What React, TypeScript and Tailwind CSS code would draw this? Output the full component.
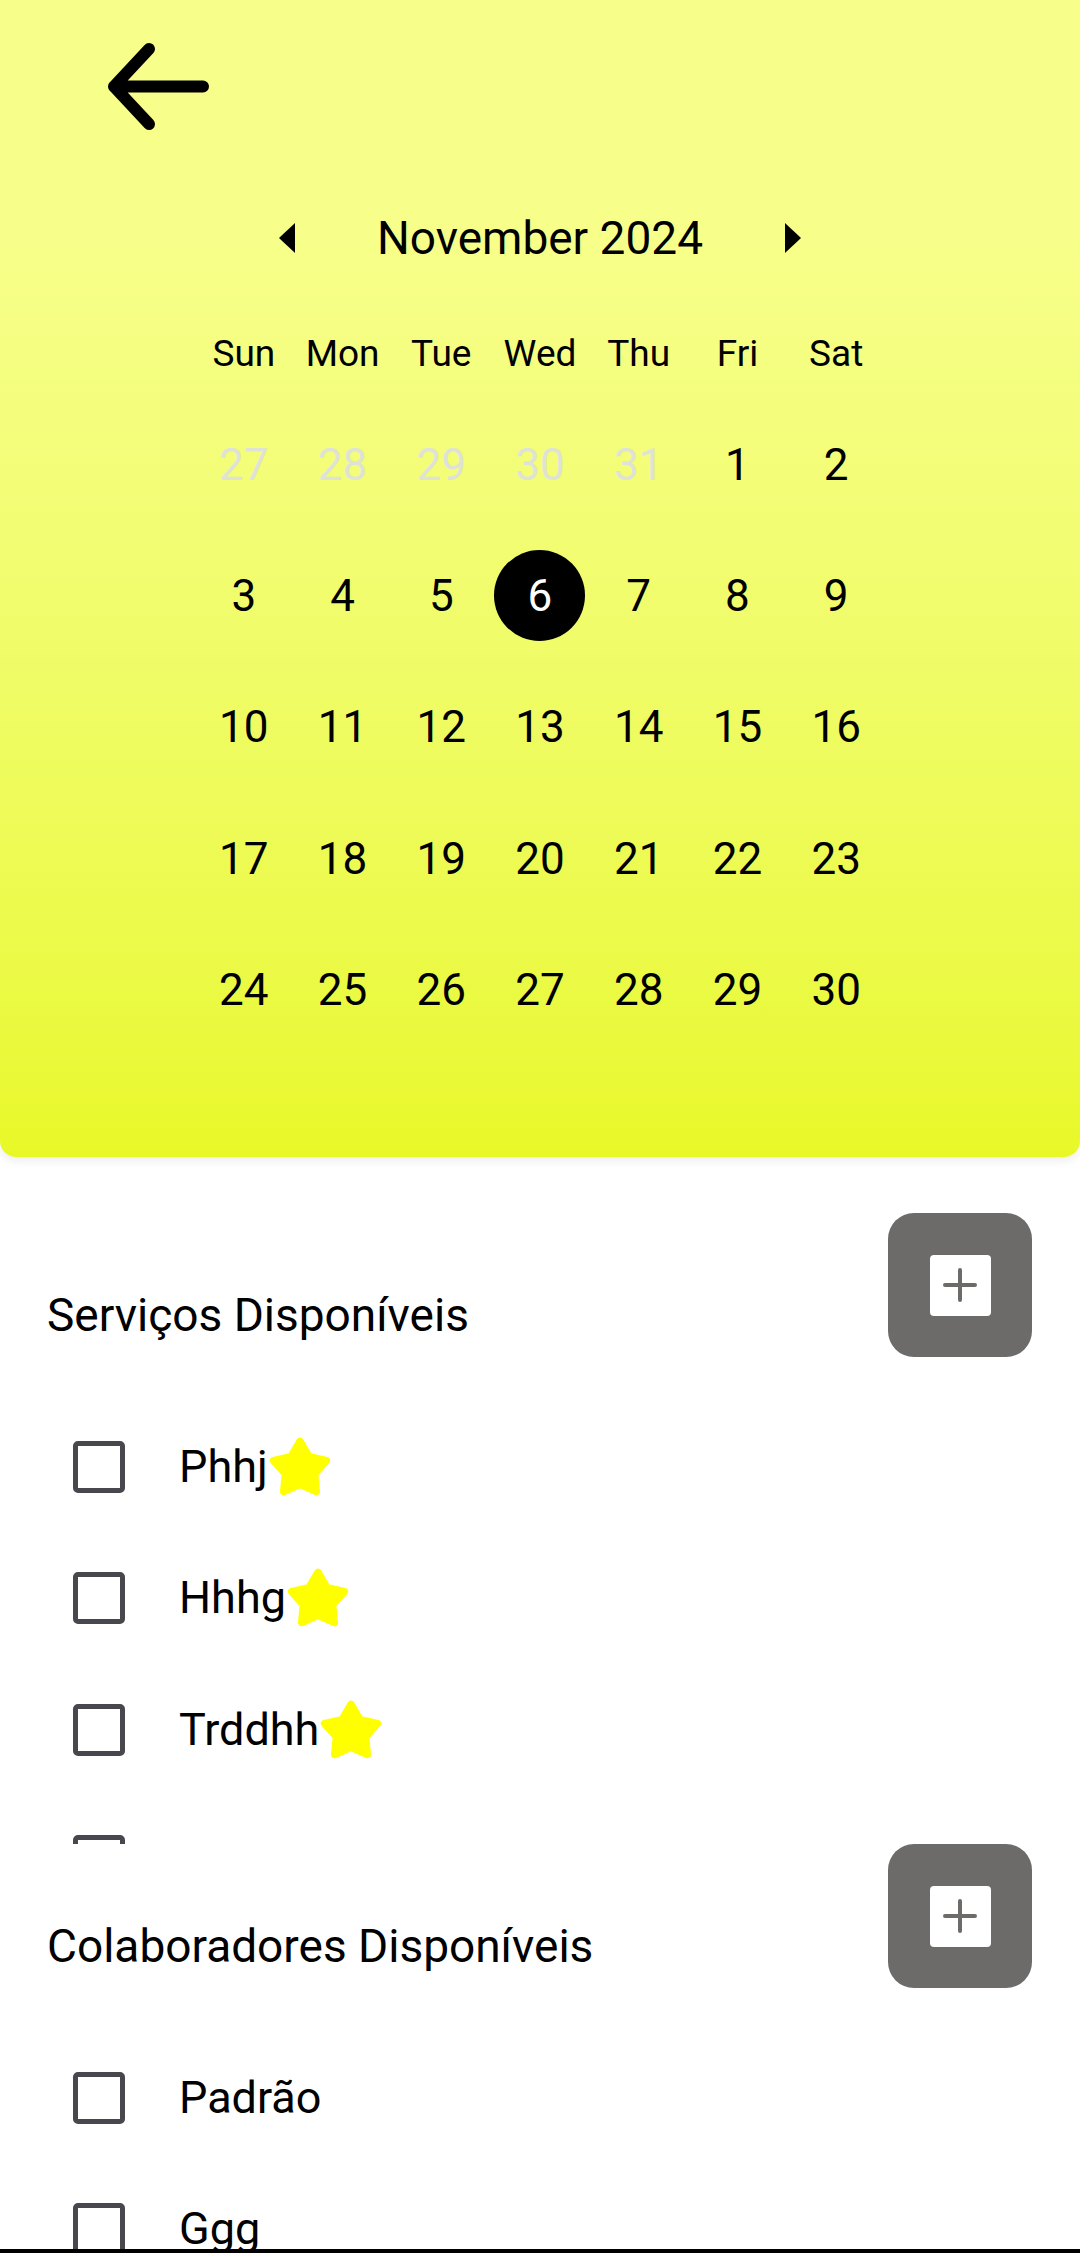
import React from "react"

const WEEKDAYS = ["Sun", "Mon", "Tue", "Wed", "Thu", "Fri", "Sat"]

const days: { n: number; muted?: boolean }[] = [
  ...[27, 28, 29, 30, 31].map((n) => ({ n, muted: true })),
  ...Array.from({ length: 30 }, (_, i) => ({ n: i + 1 })),
]

const SELECTED = 6

function Star() {
  return (
    <svg width="64" height="64" viewBox="0 0 62 62" className="shrink-0">
      <polygon
        points="31,6 39.8,20.9 56.7,24.7 45.3,37.6 46.9,54.8 31,48 15.1,54.8 16.7,37.6 5.3,24.7 22.2,20.9"
        fill="#ffff00"
        stroke="#ffff00"
        strokeWidth="7"
        strokeLinejoin="round"
      />
    </svg>
  )
}

function PlusButton() {
  return (
    <button className="w-[144px] h-[144px] rounded-[26px] bg-[#6c6b69] flex items-center justify-center shrink-0">
      <span className="w-[61px] h-[61px] rounded-[4px] bg-white flex items-center justify-center">
        <svg width="34" height="34" viewBox="0 0 34 34">
          <path d="M17 2V32M2 17H32" stroke="#6c6b69" strokeWidth="4" strokeLinecap="round" />
        </svg>
      </span>
    </button>
  )
}

function CheckItem({ label, star }: { label?: string; star?: boolean }) {
  return (
    <div className="h-[131.5px] flex items-center pl-[73px] shrink-0">
      <span className="w-[52px] h-[52px] border-[5px] border-[#48474d] rounded-[5px] shrink-0" />
      {label && <span className="ml-[54px] text-[45px] leading-[52px] text-black">{label}</span>}
      {star && <Star />}
    </div>
  )
}

function Section({ title, items, listHeight }: { title: string; items: { label?: string; star?: boolean }[]; listHeight: string }) {
  return (
    <div>
      <div className="flex items-end justify-between pl-[47px] pr-[48px]">
        <h2 className="text-[46px] leading-[52px] text-black pb-[16px]">{title}</h2>
        <PlusButton />
      </div>
      <div className={`${listHeight} overflow-hidden pt-[44px] flex flex-col`}>
        {items.map((it, i) => (
          <CheckItem key={i} label={it.label} star={it.star} />
        ))}
      </div>
    </div>
  )
}

export default function App() {
  return (
    <div className="w-[1080px] h-[2253px] bg-white flex flex-col overflow-hidden" style={{ fontFamily: "Roboto, 'Noto Sans', sans-serif" }}>
      <div className="h-[2249px] overflow-hidden">
        {/* calendar panel */}
        <div className="h-[1157px] rounded-b-[16px] bg-linear-to-b from-[#f7ff8a] from-20% to-[#e8f826] shadow-[0_4px_10px_rgba(0,0,0,0.07)]">
          <div className="pt-[43px] pl-[108px]">
            <svg width="101" height="87" viewBox="0 0 101 87">
              <path d="M95 43.5H6M6 43.5L41 6M6 43.5L41 81" stroke="#000" strokeWidth="12" strokeLinecap="round" strokeLinejoin="round" fill="none" />
            </svg>
          </div>

          <div className="mt-[78px] w-[523px] mx-auto h-[60px] flex items-center justify-between">
            <svg width="16" height="30" viewBox="0 0 16 30">
              <polygon points="16,0 16,30 0,15" fill="#000" />
            </svg>
            <span className="text-[46px] leading-[60px] text-black">November 2024</span>
            <svg width="16" height="30" viewBox="0 0 16 30">
              <polygon points="0,0 0,30 16,15" fill="#000" />
            </svg>
          </div>

          <div className="mt-[61px] w-[691px] mx-auto grid grid-cols-7 h-[50px] items-center">
            {WEEKDAYS.map((d) => (
              <span key={d} className="text-center text-[37px] leading-[50px] text-black">{d}</span>
            ))}
          </div>

          <div className="mt-[20px] w-[691px] mx-auto grid grid-cols-7 auto-rows-[131.3px]">
            {days.map((d, i) => (
              <div key={i} className="flex items-center justify-center">
                {!d.muted && d.n === SELECTED ? (
                  <span className="w-[91px] h-[91px] rounded-full bg-black text-white flex items-center justify-center text-[44px] leading-none">
                    {d.n}
                  </span>
                ) : (
                  <span className={`text-[44px] leading-none ${d.muted ? "text-[#dfe2d6]" : "text-black"}`}>{d.n}</span>
                )}
              </div>
            ))}
          </div>
        </div>

        <div className="mt-[56px]">
          <Section
            title="Serviços Disponíveis"
            listHeight="h-[487px]"
            items={[
              { label: "Phhj", star: true },
              { label: "Hhhg", star: true },
              { label: "Trddhh", star: true },
              {},
            ]}
          />
          <Section
            title="Colaboradores Disponíveis"
            listHeight="h-[600px]"
            items={[{ label: "Padrão" }, { label: "Ggg" }]}
          />
        </div>
      </div>
      <div className="h-[4px] bg-black" />
    </div>
  )
}
